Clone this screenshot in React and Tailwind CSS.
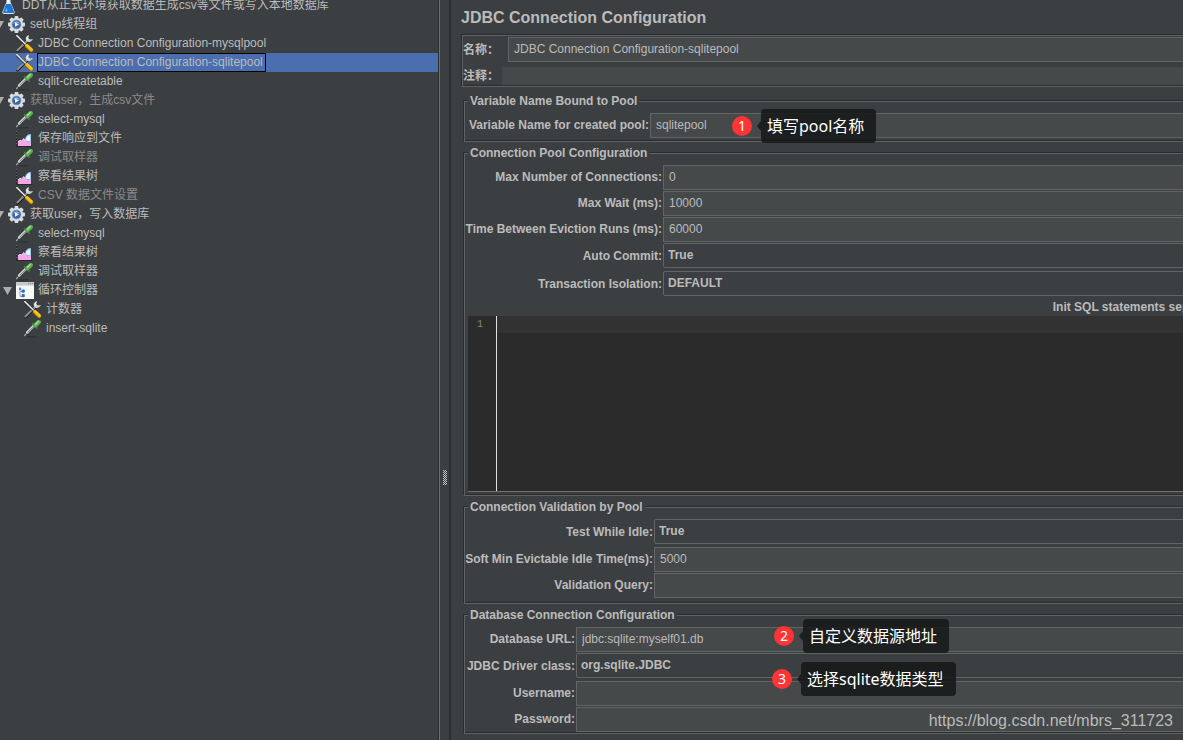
import React from 'react';

function Flask() {
  return (
    <svg viewBox="0 0 18 18" className="size-[18px]" aria-hidden="true">
      <path d="M6.500 0h4v5l4 9.500q.8 2.500-1.800 2.500H4.300q-2.600 0-1.800-2.500l4-9.500z" fill="#dce9f5" />
      <path d="M6 7h5l3 7.500q.6 1.600-1.200 1.600H4.400q-1.800 0-1.200-1.600z" fill="#1f74d4" />
      <path d="M6.500 10.500 5 14.500h2.500z" fill="#7db9f3" />
      <path d="M7.500 0h1.200v6.500H7.500z" fill="#fff" />
    </svg>
  );
}

function Gear() {
  return (
    <svg viewBox="0 0 18 18" className="size-[18px]" aria-hidden="true">
      <g fill="#d9dde0">
        <rect x="6.600" y="0" width="3.800" height="17" rx="0.800" />
        <rect x="6.600" y="0" width="3.800" height="17" rx="0.800" transform="rotate(45 8.500 8.500)" />
        <rect x="6.600" y="0" width="3.800" height="17" rx="0.800" transform="rotate(90 8.500 8.500)" />
        <rect x="6.600" y="0" width="3.800" height="17" rx="0.800" transform="rotate(135 8.500 8.500)" />
        <circle cx="8.500" cy="8.500" r="6.700" />
      </g>
      <circle cx="8.500" cy="8.500" r="4.800" fill="#8b9db4" />
      <circle cx="8.500" cy="8.500" r="4" fill="#3567ad" />
      <path d="M5.100 7.800a3.500 3.500 0 0 1 6.800 0q-3.400-1.600-6.800 0z" fill="#8fb0dc" />
      <path d="M7 6.200 11 8.500 7 10.800z" fill="#f2f7ff" />
    </svg>
  );
}

function Tools() {
  return (
    <svg viewBox="0 0 18 18" className="size-[18px]" fill="none" strokeLinecap="round" aria-hidden="true">
      <path d="M1.500 16 11.500 6" stroke="#17191a" strokeWidth="3" />
      <path d="M1.300 15.500 11.500 5.500" stroke="#8f9293" strokeWidth="1.900" />
      <path d="M12.400.4c-2.800.9-3.200 3.500-1.900 5.500 1.700 1.700 5.200 1.300 6.400-1.800l-3 .5-1.500-1.500z" fill="#cfd2d3" />
      <path d="M12.200.8c-1.200 1.100-1.300 2.200-.8 3.600" stroke="#f4f4f4" strokeWidth="1.100" />
      <path d="M.8 1 9.500 9.700" stroke="#202223" strokeWidth="2.600" />
      <path d="M.8.600 9.500 9.300" stroke="#e6e7e7" strokeWidth="1.500" />
      <path d="M10.800 10.900 15.200 15.100" stroke="#8e6206" strokeWidth="4.200" />
      <path d="M10.900 10.600 15.300 14.800" stroke="#f5b90e" strokeWidth="3.300" />
      <path d="M11.300 10 15.500 14" stroke="#ffe06b" strokeWidth="0.800" />
    </svg>
  );
}

function Pipette() {
  return (
    <svg viewBox="0 0 18 18" className="size-[18px]" fill="none" strokeLinecap="round" aria-hidden="true">
      <path d="M3 16.800h9" stroke="#2b2d2e" strokeWidth="1" />
      <path d="M.6 15.600 3.500 12" stroke="#a4a7a8" strokeWidth="1.300" />
      <path d="M3.200 12.700 10 6" stroke="#26292a" strokeWidth="3.800" />
      <path d="M3.200 12.500 10 5.800" stroke="#d0d4d4" strokeWidth="2.800" />
      <path d="M4 12.300 9.800 6.700" stroke="#55595a" strokeWidth="0.900" />
      <path d="m8.700 3.600 4.400 4.400" stroke="#357c30" strokeWidth="2" />
      <path d="M11.500 5.200 14.700 2.100" stroke="#5cab52" strokeWidth="4.400" />
      <path d="M11.400 4.200 14.300 1.500" stroke="#a9dd9d" strokeWidth="1.400" />
    </svg>
  );
}

function Chart() {
  return (
    <svg viewBox="0 0 18 18" className="size-[18px]" fill="none" aria-hidden="true">
      <path d="M.5 1v15.500H16.500" stroke="#26282a" strokeWidth="1" />
      <path d="M.5 1v15" stroke="#75797b" strokeWidth="0.800" strokeDasharray="1 2" />
      <path d="M8 15c-.2-6 2.500-10.800 5.800-11l1.200.3V15z" fill="#8fb8f0" />
      <path d="M9.800 10.500c.2-3.400 1.800-5.300 4.400-5.300v6z" fill="#f0f6ff" />
      <path d="M2 16v-4l2-1.700 1.800.7 1.900-2.500 2 3 2.200.7L15 11.500V16z" fill="#f4a6e6" />
      <path d="m2 12 2-1.700 1.800.7 1.900-2.500 2 3" stroke="#fdd9f7" strokeWidth="0.900" />
    </svg>
  );
}

function LoopWindow() {
  return (
    <svg viewBox="0 0 18 18" className="size-[18px]" aria-hidden="true">
      <rect width="18" height="17" fill="#f7f8f8" />
      <rect width="18" height="3.600" fill="#c8caca" />
      <path d="M12 1.500h1.200M14 1.500h1.200M16 1.500h1.200" stroke="#8e9091" />
      <path d="M4 7v7.500H6.500M4 9.500H6.500" stroke="#8a99ab" fill="none" strokeWidth="0.900" />
      <rect x="3" y="5.600" width="2.200" height="2.400" fill="#4d86d0" />
      <rect x="5.600" y="7.500" width="3.200" height="3.200" rx="1" fill="#2e6cc0" />
      <rect x="5.600" y="12" width="3.200" height="3.200" rx="1" fill="#2e6cc0" />
    </svg>
  );
}

const nodes = [
  { indent: 'pl-0', icon: Flask, text: 'DDT从正式环境获取数据生成csv等文件或写入本地数据库' },
  { indent: 'pl-2', icon: Gear, text: 'setUp线程组', open: true },
  { indent: 'pl-4', icon: Tools, text: 'JDBC Connection Configuration-mysqlpool' },
  { indent: 'pl-4', icon: Tools, text: 'JDBC Connection Configuration-sqlitepool', selected: true },
  { indent: 'pl-4', icon: Pipette, text: 'sqlit-createtable' },
  { indent: 'pl-2', icon: Gear, text: '获取user，生成csv文件', open: true, disabled: true },
  { indent: 'pl-4', icon: Pipette, text: 'select-mysql' },
  { indent: 'pl-4', icon: Chart, text: '保存响应到文件' },
  { indent: 'pl-4', icon: Pipette, text: '调试取样器', disabled: true },
  { indent: 'pl-4', icon: Chart, text: '察看结果树' },
  { indent: 'pl-4', icon: Tools, text: 'CSV 数据文件设置', disabled: true },
  { indent: 'pl-2', icon: Gear, text: '获取user，写入数据库', open: true },
  { indent: 'pl-4', icon: Pipette, text: 'select-mysql' },
  { indent: 'pl-4', icon: Chart, text: '察看结果树' },
  { indent: 'pl-4', icon: Pipette, text: '调试取样器' },
  { indent: 'pl-4', icon: LoopWindow, text: '循环控制器', open: true },
  { indent: 'pl-6', icon: Tools, text: '计数器' },
  { indent: 'pl-6', icon: Pipette, text: 'insert-sqlite' },
];

function TreeRow({ node }) {
  const Icon = node.icon;
  return (
    <li className={`flex h-[19px] items-center ${node.indent} ${node.selected ? 'bg-[#4b6eaf]' : ''}`}>
      {node.open ? (
        <button type="button" aria-label={`折叠 ${node.text}`} className="mr-1 w-[9px] shrink-0">
          <svg viewBox="0 0 9 8" className="h-2 w-[9px]" aria-hidden="true">
            <path d="M0 0h9L4.500 8z" fill="#adadad" />
          </svg>
        </button>
      ) : (
        <span className="mr-1 w-[9px] shrink-0" />
      )}
      <span className="mr-[3px] shrink-0">
        <Icon />
      </span>
      <span
        className={`h-[19px] border pr-[2px] leading-[17px] whitespace-nowrap ${
          node.selected ? 'border-black' : 'border-transparent'
        } ${node.disabled ? 'text-[#8a8a8a]' : ''}`}
      >
        {node.text}
      </span>
    </li>
  );
}

const fieldBase = 'block h-[25px] w-full border border-[#646464] pb-[2px] outline-none';

function TextField({ id, label, value = '', type = 'text', children }) {
  return (
    <>
      <label htmlFor={id} className="flex justify-end pb-[2px] font-bold whitespace-nowrap">
        {label}
      </label>
      <div className="relative">
        <input id={id} type={type} defaultValue={value} className={`${fieldBase} bg-[#45494a] pl-[5px]`} />
        {children}
      </div>
    </>
  );
}

function SelectField({ id, label, value, children }) {
  return (
    <>
      <label htmlFor={id} className="flex justify-end font-bold whitespace-nowrap">
        {label}
      </label>
      <div className="relative">
        <select
          id={id}
          defaultValue={value}
          className={`${fieldBase} appearance-none rounded-[2px] bg-[#3c3f41] pl-1 font-bold`}
        >
          <option>{value}</option>
        </select>
        {children}
      </div>
    </>
  );
}

function Group({ id, title, className = '', children }) {
  return (
    <section
      aria-labelledby={id}
      className={`ml-[2px] border border-[#2b2d2e] border-b-[#5f6264] pl-1 shadow-[inset_1px_1px_0_#5f6264,inset_0_-1px_0_#2b2d2e] ${className}`}
    >
      <h2 id={id} className="relative -mt-2 mb-1 h-4 w-fit bg-[#3c3f41] px-[2px] leading-4 font-bold">
        {title}
      </h2>
      {children}
    </section>
  );
}

function Callout({ number, text, className }) {
  return (
    <div className={`absolute z-10 flex items-center text-white ${className}`}>
      <span className="flex size-5 items-center justify-center rounded-full bg-[#ff3434] font-['Noto_Sans','Noto_Sans_CJK_SC',sans-serif] text-sm leading-5">
        {number}
      </span>
      <svg viewBox="0 0 4 10" className="ml-[5px] h-[10px] w-1" aria-hidden="true">
        <path d="M4 0v10L0 5z" fill="#151718" fillOpacity="0.850" />
      </svg>
      <span className="h-[34px] rounded bg-[#151718]/85 pr-3 pl-[6px] font-['Noto_Sans','Noto_Sans_CJK_SC',sans-serif] text-base leading-[34px] whitespace-nowrap">
        {text}
      </span>
    </div>
  );
}

export default function App() {
  return (
    <div className="relative flex min-h-screen overflow-hidden bg-[#3c3f41] font-['Liberation_Sans','Noto_Sans_CJK_SC',sans-serif] text-xs text-[#bbbbbb]">
      <nav aria-label="测试计划" className="w-[439px] shrink-0 overflow-hidden border-r border-[#2b2d2e]">
        <ul className="-mt-1 -ml-[13px]">
          {nodes.map((node, i) => (
            <TreeRow key={i} node={node} />
          ))}
        </ul>
      </nav>

      <div className="w-3 shrink-0 border-r-2 border-l border-r-[#2b2d2e] border-l-[#6f7274] pt-[470px] pl-[3px]">
        <svg viewBox="0 0 4 15" className="h-[15px] w-1" shapeRendering="crispEdges" aria-hidden="true">
          <defs>
            <pattern id="grip" width="4" height="4" patternUnits="userSpaceOnUse">
              <path d="M3 1h1v1H3zM1 1h1v1H1zM2 2h1v1H2zM0 2h1v1H0zM1 3h1v1H1zM3 3h1v1H3zM0 0h1v1H0zM2 0h1v1H2z" fill="#c8c8c8" />
              <path d="M3 0h1v1H3zM0 3h1v1H0z" fill="#222" />
            </pattern>
          </defs>
          <rect width="4" height="15" fill="url(#grip)" />
        </svg>
      </div>

      <main className="min-w-0 flex-1 overflow-hidden pl-[10px]">
        <form className="min-w-[1418px] pb-1">
          <h1 className="h-[34px] pt-[6px] text-base leading-6 font-bold">JDBC Connection Configuration</h1>

          <div className="mb-[13px] flex flex-col gap-[5px] border border-[#2b2d2e] border-b-[#5f6264] pt-[2px] pb-px pl-px shadow-[inset_1px_1px_0_#5f6264,inset_0_-1px_0_#2b2d2e]">
            <div className="flex items-center">
              <label htmlFor="name" className="w-[45px] shrink-0 font-bold whitespace-nowrap">
                名称：
              </label>
              <input
                id="name"
                defaultValue="JDBC Connection Configuration-sqlitepool"
                className={`${fieldBase} bg-[#45494a] pl-[5px]`}
              />
            </div>
            <div className="flex h-[18px] items-center">
              <label htmlFor="comment" className="w-[39px] shrink-0 font-bold whitespace-nowrap">
                注释：
              </label>
              <input id="comment" className="h-[18px] w-full bg-[#45494a] pl-[5px] outline-none" />
            </div>
          </div>

          <div className="flex flex-col gap-[10px]">
            <Group id="bound" title="Variable Name Bound to Pool" className="pb-[3px]">
              <div className="grid grid-cols-[181px_1fr] items-center gap-x-px">
                <TextField id="pool" label="Variable Name for created pool:" value="sqlitepool">
                  <Callout number="1" text="填写pool名称" className="-top-1 left-[82px]" />
                </TextField>
              </div>
            </Group>

            <Group id="poolconf" title="Connection Pool Configuration" className="pb-[3px]">
              <div className="grid grid-cols-[194px_1fr] items-center gap-px">
                <TextField id="maxconn" label="Max Number of Connections:" value="0" />
                <TextField id="maxwait" label="Max Wait (ms):" value="10000" />
                <TextField id="eviction" label="Time Between Eviction Runs (ms):" value="60000" />
                <SelectField id="autocommit" label="Auto Commit:" value="True" />
              </div>
              <div className="mt-[3px] grid grid-cols-[194px_1fr] items-center gap-px">
                <SelectField id="isolation" label="Transaction Isolation:" value="DEFAULT" />
              </div>
              <label htmlFor="initsql" className="block h-5 text-center leading-[22px] font-bold">
                Init SQL statements separated by new line
              </label>
              <div className="flex h-44 border-b border-[#6f7274] bg-[#2b2b2b]">
                <span className="w-7 shrink-0 pr-[13px] text-right font-['Liberation_Mono',monospace] text-[10px] leading-[17px] text-[#7b8b80]">
                  1
                </span>
                <textarea
                  id="initsql"
                  className="block w-full resize-none border-l border-[#e0e0e0] bg-[linear-gradient(#323232,#323232)] bg-[length:100%_17px] bg-no-repeat outline-none"
                />
              </div>
            </Group>

            <Group id="validation" title="Connection Validation by Pool" className="pb-[5px]">
              <div className="grid grid-cols-[185px_1fr] items-center gap-px">
                <SelectField id="idle" label="Test While Idle:" value="True" />
              </div>
              <div className="mt-[3px] grid grid-cols-[185px_1fr] items-center gap-px">
                <TextField id="softmin" label="Soft Min Evictable Idle Time(ms):" value="5000" />
                <TextField id="query" label="Validation Query:" />
              </div>
            </Group>

            <Group id="database" title="Database Connection Configuration" className="pb-px">
              <div className="grid grid-cols-[107px_1fr] items-center gap-px">
                <TextField id="url" label="Database URL:" value="jdbc:sqlite:myself01.db">
                  <Callout number="2" text="自定义数据源地址" className="-top-2 left-[198px]" />
                </TextField>
                <SelectField id="driver" label="JDBC Driver class:" value="org.sqlite.JDBC">
                  <Callout number="3" text="选择sqlite数据类型" className="top-[9px] left-[196px]" />
                </SelectField>
              </div>
              <div className="mt-[3px] grid grid-cols-[107px_1fr] items-center gap-px">
                <TextField id="user" label="Username:" />
                <TextField id="password" label="Password:" type="password" />
              </div>
            </Group>
          </div>
        </form>
      </main>

      <a
        href="https://blog.csdn.net/mbrs_311723"
        className="absolute right-[10px] bottom-[7px] text-base leading-6 text-[#b9bbbc]"
      >
        https://blog.csdn.net/mbrs_311723
      </a>
    </div>
  );
}
